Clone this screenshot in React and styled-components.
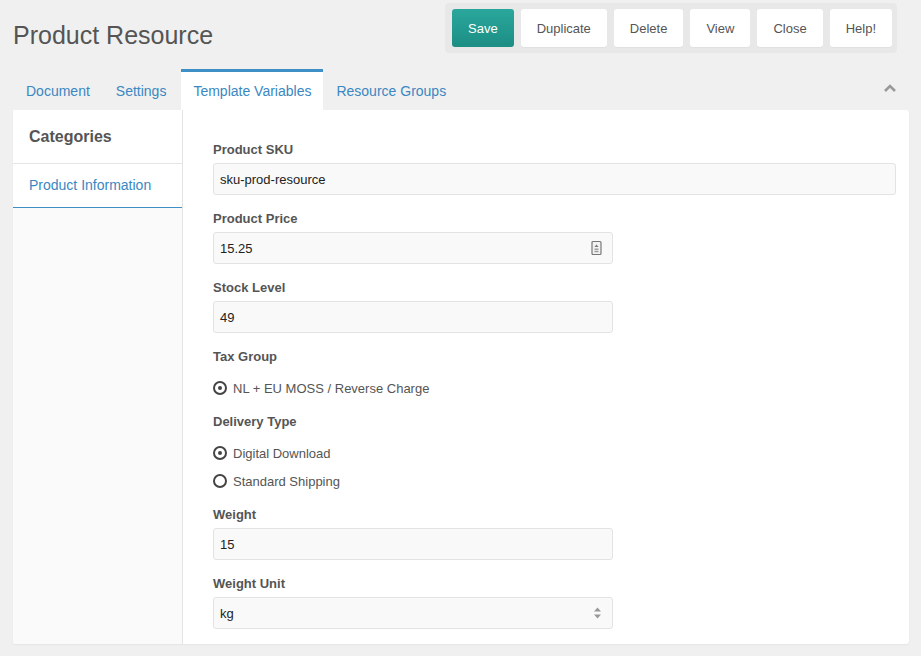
import React from 'react';
import styled, { createGlobalStyle } from 'styled-components';

const GlobalStyle = createGlobalStyle`
  html, body {
    margin: 0;
    padding: 0;
    background: #f0f0f0;
    font-family: 'Liberation Sans', Arial, sans-serif;
  }
  * { box-sizing: border-box; }
`;

const Page = styled.div`
  width: 921px;
  height: 656px;
  background: #f0f0f0;
  overflow: hidden;
`;

const Header = styled.header`
  display: flex;
  justify-content: space-between;
  align-items: flex-start;
  padding: 3px 24px 0 13px;
`;

const Title = styled.h1`
  margin: 17px 0 0;
  font-size: 25px;
  line-height: 30px;
  font-weight: 400;
  color: #555;
`;

const Toolbar = styled.div`
  display: flex;
  gap: 7px;
  padding: 6px 5px 6px 7px;
  background: #e8e8e8;
  border-radius: 4px;
`;

const Button = styled.button`
  height: 38px;
  padding: 0 16px;
  border: none;
  border-radius: 3px;
  font-family: inherit;
  font-size: 13px;
  color: ${p => (p.primary ? '#fff' : '#555')};
  background: ${p => (p.primary ? 'linear-gradient(#2aa79c, #1c8e84)' : '#fff')};
  box-shadow: ${p => (p.primary ? 'none' : '0 1px 1px rgba(0,0,0,0.03)')};
  cursor: pointer;
`;

const TabBar = styled.div`
  display: flex;
  align-items: flex-end;
  margin-top: 16px;
  padding: 0 24px 0 13px;
  height: 41px;
`;

const Tab = styled.div`
  height: 41px;
  display: flex;
  align-items: center;
  font-size: 14px;
  color: #3a87c2;
  border-top: 3px solid ${p => (p.active ? '#3d8fc6' : 'transparent')};
  background: ${p => (p.active ? '#fff' : 'transparent')};
  padding: 0 ${p => (p.active ? '12px' : '13px')};
  margin-left: ${p => (p.active ? '2px' : '0')};
`;

const Collapse = styled.div`
  margin-left: auto;
  align-self: center;
  margin-top: -4px;
  display: flex;
`;

const Panel = styled.div`
  display: flex;
  margin: 0 12px 0 13px;
  background: #fff;
  border-radius: 0 3px 3px 3px;
  box-shadow: 0 1px 2px rgba(0, 0, 0, 0.05);
`;

const Sidebar = styled.aside`
  width: 170px;
  flex-shrink: 0;
  background: #fafafa;
  border-right: 1px solid #e4e4e4;
  border-radius: 0 0 0 3px;
`;

const SideHeading = styled.div`
  height: 54px;
  display: flex;
  align-items: center;
  padding-left: 16px;
  font-size: 16px;
  font-weight: 700;
  color: #555;
  background: #fff;
  border-bottom: 1px solid #e6e6e6;
`;

const SideItem = styled.div`
  height: 44px;
  display: flex;
  align-items: center;
  padding: 0 0 2px 16px;
  font-size: 14px;
  color: #3a87c2;
  background: #fff;
  border-bottom: 1px solid #3d8fc6;
`;

const Content = styled.div`
  flex: 1;
  padding: 31px 13px 15px 30px;
  display: flex;
  flex-direction: column;
  gap: 15px;
`;

const Field = styled.div`
  display: flex;
  flex-direction: column;
`;

const Label = styled.label`
  font-size: 13px;
  line-height: 18px;
  font-weight: 700;
  color: #555;
  margin-bottom: 4px;
`;

const InputBox = styled.div`
  position: relative;
  width: ${p => (p.full ? '100%' : '400px')};
  height: 32px;
  display: flex;
  align-items: center;
  padding: 0 6px;
  background: #f9f9f9;
  border: 1px solid #e3e3e3;
  border-radius: 3px;
  font-size: 13px;
  color: #222;
`;

const InputIcon = styled.span`
  position: absolute;
  right: 10px;
  top: 50%;
  transform: translateY(-50%);
  display: flex;
`;

const RadioGroup = styled.div`
  display: flex;
  flex-direction: column;
  gap: 8px;
  margin-top: 8px;
`;

const RadioRow = styled.div`
  display: flex;
  align-items: center;
  gap: 6px;
  height: 20px;
  font-size: 13px;
  color: #555;
`;

const RadioDot = styled.span`
  width: 14px;
  height: 14px;
  border-radius: 50%;
  border: 2px solid #444;
  display: flex;
  align-items: center;
  justify-content: center;

  &::after {
    content: '';
    width: 4px;
    height: 4px;
    border-radius: 50%;
    background: ${p => (p.checked ? '#444' : 'transparent')};
  }
`;

const NumberIcon = () => (
  <svg width="11" height="15" viewBox="0 0 11 15">
    <rect x="1" y="1" width="9" height="13" rx="1" fill="#f2f2f2" stroke="#777" strokeWidth="1.2" />
    <path d="M3.5 6.5 L5.5 4 L7.5 6.5 Z" fill="#777" />
    <rect x="3.5" y="8" width="4" height="1.4" fill="#999" />
    <rect x="3.5" y="10.3" width="4" height="1.4" fill="#999" />
  </svg>
);

const SelectArrows = () => (
  <svg width="9" height="13" viewBox="0 0 9 13">
    <path d="M1 5 L4.5 1 L8 5 Z" fill="#999" />
    <path d="M1 8 L4.5 12 L8 8 Z" fill="#999" />
  </svg>
);

const Chevron = () => (
  <svg width="14" height="10" viewBox="0 0 14 10">
    <path d="M2 8 L7 3 L12 8" fill="none" stroke="#999" strokeWidth="2.6" />
  </svg>
);

const Radio = ({ checked, children }) => (
  <RadioRow>
    <RadioDot checked={checked} />
    {children}
  </RadioRow>
);

export default function App() {
  return (
    <Page>
      <GlobalStyle />
      <Header>
        <Title>Product Resource</Title>
        <Toolbar>
          <Button primary>Save</Button>
          <Button>Duplicate</Button>
          <Button>Delete</Button>
          <Button>View</Button>
          <Button>Close</Button>
          <Button>Help!</Button>
        </Toolbar>
      </Header>

      <TabBar>
        <Tab>Document</Tab>
        <Tab>Settings</Tab>
        <Tab active>Template Variables</Tab>
        <Tab>Resource Groups</Tab>
        <Collapse><Chevron /></Collapse>
      </TabBar>

      <Panel>
        <Sidebar>
          <SideHeading>Categories</SideHeading>
          <SideItem>Product Information</SideItem>
        </Sidebar>
        <Content>
          <Field>
            <Label>Product SKU</Label>
            <InputBox full>sku-prod-resource</InputBox>
          </Field>
          <Field>
            <Label>Product Price</Label>
            <InputBox>
              15.25
              <InputIcon><NumberIcon /></InputIcon>
            </InputBox>
          </Field>
          <Field>
            <Label>Stock Level</Label>
            <InputBox>49</InputBox>
          </Field>
          <Field>
            <Label>Tax Group</Label>
            <RadioGroup>
              <Radio checked>NL + EU MOSS / Reverse Charge</Radio>
            </RadioGroup>
          </Field>
          <Field>
            <Label>Delivery Type</Label>
            <RadioGroup>
              <Radio checked>Digital Download</Radio>
              <Radio>Standard Shipping</Radio>
            </RadioGroup>
          </Field>
          <Field>
            <Label>Weight</Label>
            <InputBox>15</InputBox>
          </Field>
          <Field>
            <Label>Weight Unit</Label>
            <InputBox>
              kg
              <InputIcon><SelectArrows /></InputIcon>
            </InputBox>
          </Field>
        </Content>
      </Panel>
    </Page>
  );
}
